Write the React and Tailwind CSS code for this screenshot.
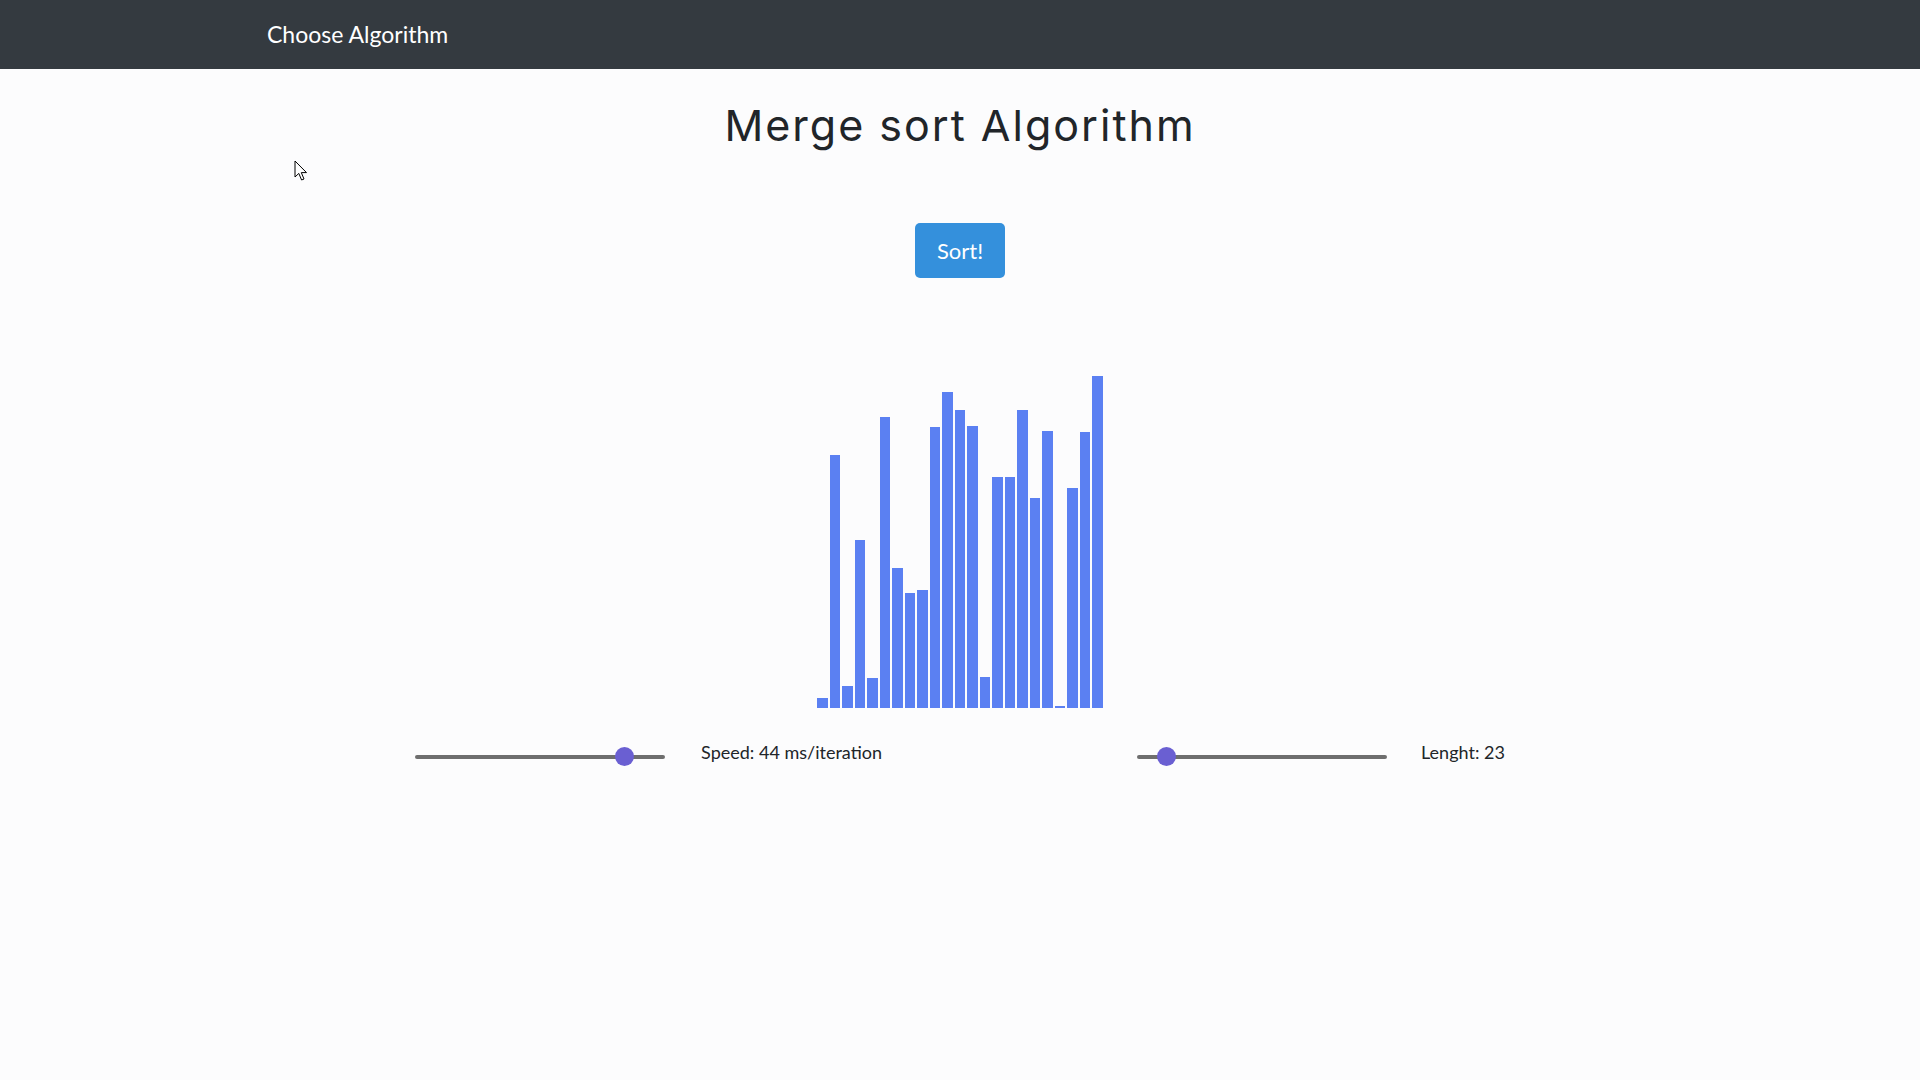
import React, { useState } from 'react';

const bars = [10, 253, 22, 168, 30, 291, 140, 115, 118, 281, 316, 298, 282, 31, 231, 231, 298, 210, 277, 2, 220, 276, 332];

const sliderClass =
  'appearance-none w-[250px] h-[18px] bg-transparent cursor-pointer ' +
  '[&::-webkit-slider-runnable-track]:h-[4px] [&::-webkit-slider-runnable-track]:rounded-full [&::-webkit-slider-runnable-track]:bg-[#6e6e6e] ' +
  '[&::-webkit-slider-thumb]:appearance-none [&::-webkit-slider-thumb]:w-[19px] [&::-webkit-slider-thumb]:h-[19px] [&::-webkit-slider-thumb]:rounded-full [&::-webkit-slider-thumb]:bg-[#6a5fd2] [&::-webkit-slider-thumb]:mt-[-7.5px]';

const Cursor = () => (
  <svg className="absolute left-[294px] top-[160px]" width="14" height="22" viewBox="0 0 14 22">
    <path d="M1 1 L1 17 L4.8 13.4 L7.6 20 L10 19 L7.3 12.6 L12.5 12.6 Z" fill="#fff" stroke="#000" strokeWidth="1" strokeLinejoin="round" />
  </svg>
);

const App = () => {
  const [speed, setSpeed] = useState(44);
  const [length, setLength] = useState(23);

  return (
    <div className="relative min-h-screen bg-[#fcfcfd] text-[#212529] font-['Lato','Open_Sans',sans-serif]">
      <nav className="bg-[#343a40] h-[69px] flex items-center">
        <span className="ml-[267px] text-white text-[23px] leading-none">Choose Algorithm</span>
      </nav>

      <h1 className="mt-[31px] text-center text-[43px] leading-[50px] font-normal text-[#212529] font-['Inter','Open_Sans',sans-serif] tracking-[2px]">
        Merge sort Algorithm
      </h1>

      <div className="flex justify-center mt-[73px]">
        <button className="w-[90px] h-[55px] rounded-[5px] bg-[#3490dc] text-white text-[22px] leading-none">
          Sort!
        </button>
      </div>

      <div className="flex justify-center items-end gap-[2px] h-[340px] mt-[90px]">
        {bars.map((h, i) => (
          <div key={i} className="w-[10.5px] bg-[#5b80f2]" style={{ height: h }} />
        ))}
      </div>

      <div className="flex justify-center items-center gap-[255px] mt-[31px]">
        <div className="flex items-center gap-[36px]">
          <input
            type="range"
            min="5"
            max="50"
            value={speed}
            onChange={(e) => setSpeed(Number(e.target.value))}
            className={sliderClass}
          />
          <span className="text-[18px] mb-[8px]">Speed: {speed} ms/iteration</span>
        </div>
        <div className="flex items-center gap-[34px]">
          <input
            type="range"
            min="10"
            max="160"
            value={length}
            onChange={(e) => setLength(Number(e.target.value))}
            className={sliderClass}
          />
          <span className="text-[18px] mb-[8px]">Lenght: {length}</span>
        </div>
      </div>

      <Cursor />
    </div>
  );
};

export default App;
